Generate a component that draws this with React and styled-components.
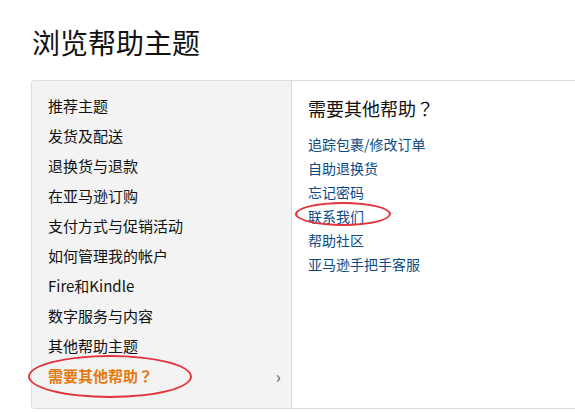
import React from 'react';
import styled, { createGlobalStyle } from 'styled-components';

const GlobalStyle = createGlobalStyle`
  html, body {
    margin: 0;
    padding: 0;
    overflow: hidden;
    background: #fff;
  }
  body {
    font-family: "Noto Sans CJK SC", "Noto Sans", Arial, sans-serif;
    color: #111;
  }
`;

const topics = [
  '推荐主题',
  '发货及配送',
  '退换货与退款',
  '在亚马逊订购',
  '支付方式与促销活动',
  '如何管理我的帐户',
  'Fire和Kindle',
  '数字服务与内容',
  '其他帮助主题',
];

const links = [
  { label: '追踪包裹/修改订单' },
  { label: '自助退换货' },
  { label: '忘记密码' },
  { label: '联系我们', circled: true },
  { label: '帮助社区' },
  { label: '亚马逊手把手客服' },
];

const Page = styled.div`
  padding: 23px 0 0 31px;
`;

const Title = styled.h1`
  margin: 0 0 0 1px;
  font-size: 28px;
  font-weight: 400;
  line-height: 38px;
  color: #111;
`;

const Panel = styled.div`
  margin-top: 19px;
  display: flex;
  border: 1px solid #ddd;
  border-right: none;
  border-radius: 4px 0 0 4px;
  height: 327px;
`;

const Sidebar = styled.ul`
  list-style: none;
  margin: 0;
  padding: 9px 0 0;
  width: 259px;
  flex-shrink: 0;
  background: #f3f3f3;
  border-right: 1px solid #ddd;
  border-radius: 4px 0 0 4px;
`;

const Topic = styled.li`
  position: relative;
  display: flex;
  align-items: center;
  justify-content: space-between;
  height: 30px;
  padding: 0 10px 0 16px;
  font-size: 15px;
  font-weight: ${(p) => (p.$active ? 700 : 400)};
  color: ${(p) => (p.$active ? '#e47911' : '#111')};
`;

// full-width question mark drawn centred, as in the original font
const Qmark = styled.span`
  font-family: "Noto Sans CJK JP", "Noto Sans CJK SC", sans-serif;
`;

const Chevron = styled.span`
  font-size: 17px;
  font-weight: 400;
  color: #555;
  line-height: 1;
`;

const Ring = styled.span`
  position: absolute;
  border: 2px solid #e2323a;
  border-radius: 50%;
  pointer-events: none;
`;

const TopicRing = styled(Ring)`
  left: -4px;
  top: -5px;
  width: 160px;
  height: 39px;
`;

const Content = styled.div`
  flex: 1;
  padding: 14px 0 0 16px;
`;

const Heading = styled.h2`
  margin: 0 0 10px;
  font-size: 18px;
  font-weight: 400;
  line-height: 26px;
  color: #111;
`;

const LinkList = styled.ul`
  list-style: none;
  margin: 0;
  padding: 0;
`;

const LinkItem = styled.li`
  position: relative;
  height: 24px;
  line-height: 24px;
`;

const HelpLink = styled.a`
  font-size: 14px;
  color: #0a4a86;
  text-decoration: none;
`;

const LinkRing = styled(Ring)`
  left: -13px;
  top: -1px;
  width: 92px;
  height: 20px;
`;

export default function App() {
  return (
    <Page>
      <GlobalStyle />
      <Title>浏览帮助主题</Title>
      <Panel>
        <Sidebar>
          {topics.map((t) => (
            <Topic key={t}>{t}</Topic>
          ))}
          <Topic $active>
            <span>
              需要其他帮助<Qmark>？</Qmark>
            </span>
            <Chevron>›</Chevron>
            <TopicRing />
          </Topic>
        </Sidebar>
        <Content>
          <Heading>
            需要其他帮助<Qmark>？</Qmark>
          </Heading>
          <LinkList>
            {links.map((l) => (
              <LinkItem key={l.label}>
                <HelpLink href="#">{l.label}</HelpLink>
                {l.circled && <LinkRing />}
              </LinkItem>
            ))}
          </LinkList>
        </Content>
      </Panel>
    </Page>
  );
}
